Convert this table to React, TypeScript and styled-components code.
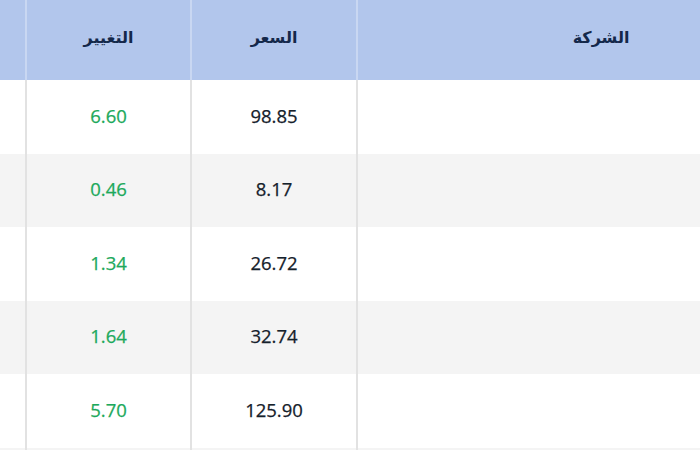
import styled, { createGlobalStyle } from 'styled-components';

const Global = createGlobalStyle`
  html, body { margin: 0; padding: 0; background: #fff; }
  body { width: 700px; height: 450px; overflow: hidden; }
`;

const Frame = styled.div`
  width: 700px;
  height: 450px;
  overflow: hidden;
  font-family: 'Noto Sans', 'DejaVu Sans', sans-serif;
`;

const Grid = styled.div`
  display: grid;
  grid-template-columns: 25px 165px 166px 344px;
  grid-auto-rows: 73.5px;
  grid-template-rows: 80px;
`;

const HeadCell = styled.div<{ $shift?: number }>`
  background: #b2c6ec;
  border-left: 2px solid #c9d7f2;
  display: flex;
  align-items: center;
  justify-content: center;
  padding-left: ${(p) => p.$shift ?? 0}px;
  padding-bottom: 6px;
  color: #14284a;
  font-size: 16px;
  font-weight: 700;
  direction: rtl;
  &:first-child { border-left: none; }
`;

const Cell = styled.div<{ $alt: boolean; $green?: boolean }>`
  background: ${(p) => (p.$alt ? '#f4f4f4' : '#fff')};
  border-left: 2px solid #e2e2e2;
  display: flex;
  align-items: center;
  justify-content: center;
  padding-bottom: 3px;
  color: ${(p) => (p.$green ? '#1da95c' : '#15212b')};
  font-family: 'Open Sans', 'Noto Sans', sans-serif;
  font-size: 18.5px;
  font-weight: 500;
  -webkit-text-stroke: 0.25px currentColor;
  &:nth-child(4n + 1) { border-left: none; }
`;

const rows = [
  { price: '98.85', change: '6.60' },
  { price: '8.17', change: '0.46' },
  { price: '26.72', change: '1.34' },
  { price: '32.74', change: '1.64' },
  { price: '125.90', change: '5.70' },
  { price: '', change: '' },
];

export default function App() {
  return (
    <Frame>
      <Global />
      <Grid>
        <HeadCell />
        <HeadCell>التغيير</HeadCell>
        <HeadCell>السعر</HeadCell>
        <HeadCell $shift={144}>الشركة</HeadCell>
        {rows.map((r, i) => [
          <Cell key={`a${i}`} $alt={i % 2 === 1} />,
          <Cell key={`c${i}`} $alt={i % 2 === 1} $green>{r.change}</Cell>,
          <Cell key={`p${i}`} $alt={i % 2 === 1}>{r.price}</Cell>,
          <Cell key={`n${i}`} $alt={i % 2 === 1} />,
        ])}
      </Grid>
    </Frame>
  );
}
